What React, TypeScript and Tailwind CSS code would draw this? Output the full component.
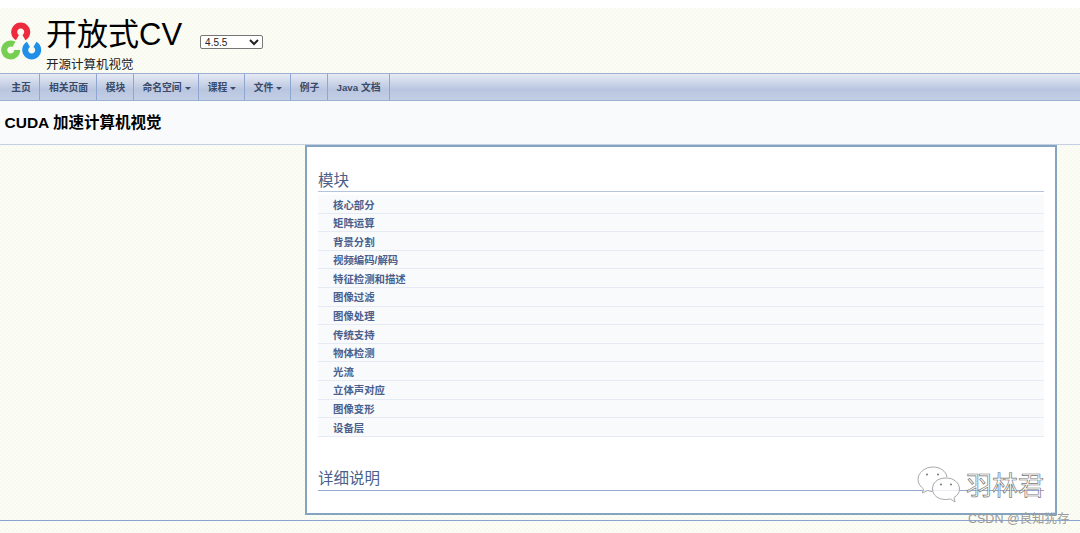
//dependencies
import React from "react";

const fontStack = "font-['Liberation_Sans','Noto_Sans_CJK_SC',sans-serif]";

const navItems = [
  { label: "主页", width: "w-[40px]", pad: "pl-[3px]" },
  { label: "相关页面", width: "w-[57px]", pad: "pl-[1px]" },
  { label: "模块", width: "w-[37px]", pad: "pl-[1px]" },
  { label: "命名空间", width: "w-[65px]", pad: "pl-[1px]", caret: true },
  { label: "课程", width: "w-[46px]", pad: "pl-[1px]", caret: true },
  { label: "文件", width: "w-[46px]", pad: "pl-[1px]", caret: true },
  { label: "例子", width: "w-[37px]", pad: "pl-[1px]" },
  { label: "Java 文档", width: "w-[62px]", pad: "pl-0" },
];

const modules = [
  "核心部分",
  "矩阵运算",
  "背景分割",
  "视频编码/解码",
  "特征检测和描述",
  "图像过滤",
  "图像处理",
  "传统支持",
  "物体检测",
  "光流",
  "立体声对应",
  "图像变形",
  "设备层",
];

const Logo: React.FC = () => (
  <svg width="44" height="44" viewBox="0 0 44 44" fill="none" className="shrink-0">
    <path d="M17.45 19.63 A6.5 6.5 0 1 1 23.95 19.63" stroke="#ee2a3e" strokeWidth="6" />
    <path d="M17.2 32 A6.5 6.5 0 1 1 13.95 26.37" stroke="#76cf52" strokeWidth="6" />
    <path d="M34.95 26.37 A6.5 6.5 0 1 1 28.45 26.37" stroke="#1f8fe8" strokeWidth="6" />
  </svg>
);

const WeChat: React.FC = () => (
  <svg width="44" height="40" viewBox="0 0 44 40" fill="none" stroke="#a8a8a8" strokeWidth="1">
    <path d="M16 1 C8 1 1 6.500 1 13.500 C1 17.500 3.500 20.500 6.500 23 L5.500 27 L10.500 24.500 C12 25 14 25.500 15.500 25.500" fill="#ffffffcc" />
    <path d="M30 11 C29 5 23 1 16 1" />
    <path d="M29 12 C20 12 15.500 17 15.500 23 C15.500 29 21 33.500 28.500 33.500 C30.500 33.500 32 33 33.500 33 L38 36 L37 31.500 C40.500 29.500 42.500 26.500 42.500 23 C42.500 17 37 12 29 12 Z" fill="#ffffffcc" />
    <circle cx="10" cy="8.500" r="1" fill="#777777" stroke="none" />
    <circle cx="21" cy="8.500" r="1" fill="#777777" stroke="none" />
    <circle cx="24" cy="18.500" r="1" fill="#777777" stroke="none" />
    <circle cx="34" cy="18.500" r="1" fill="#777777" stroke="none" />
  </svg>
);

const App: React.FC = () => {
  return (
    <div
      className={`relative h-[533px] w-[1080px] overflow-hidden bg-[#fbfcf5] bg-[repeating-conic-gradient(#f8f9ef_0_25%,#fdfdf8_0_50%)] bg-[length:4px_4px] ${fontStack}`}
    >
      <div className="h-2 bg-white" />

      {/* header */}
      <div className="flex h-[65px]">
        <div className="mt-[10px] h-[44px]">
          <Logo />
        </div>
        <div className="ml-[2px] flex flex-col">
          <div className="flex items-start">
            <h1 className="mt-[9px] text-[31px] leading-[36px] text-black">开放式CV</h1>
            <select className="mt-[27px] ml-[18px] h-[14px] w-[63px] rounded-[2px] border border-[#767676] bg-white text-[10px] leading-none text-[#222222]">
              <option>4.5.5</option>
            </select>
          </div>
          <p className="mt-[5px] text-[12.500px] leading-[15px] text-[#222222]">开源计算机视觉</p>
        </div>
      </div>

      {/* nav */}
      <div className="flex h-[28px] border-t border-b border-[#9cb0d3] bg-[linear-gradient(#e6eaf4,#b9c6e0_60%,#c3cfe5)]">
        {navItems.map((item) => (
          <div
            key={item.label}
            className={`flex shrink-0 items-center justify-center gap-[3px] border-r border-[#8fa6d0] pt-[2px] text-[9.800px] font-bold text-[#3a4a68] ${item.width} ${item.pad}`}
          >
            {item.label}
            {item.caret && (
              <span className="mt-px h-0 w-0 border-x-[3px] border-t-[3px] border-x-transparent border-t-[#3a4a68]" />
            )}
          </div>
        ))}
      </div>

      {/* title */}
      <div className="flex h-[44px] items-center border-b border-[#c4cfe5] bg-[#f9fafc] pl-[4.500px]">
        <h2 className="text-[15.500px] font-bold text-black">CUDA 加速计算机视觉</h2>
      </div>

      {/* contents */}
      <div className="ml-[305px] h-[370px] w-[752px] border-2 border-[#84a4c0] bg-white px-[11px]">
        <h3 className="mt-[23px] border-b border-[#b5c3dd] text-[15.500px] leading-[21px] font-normal text-[#4a5f8a]">
          模块
        </h3>
        <div className="mt-[3px]">
          {modules.map((name) => (
            <div
              key={name}
              className="flex h-[18.600px] items-center border-b border-[#e6eaf3] bg-[#f9fafc] pt-[3px] pl-[15px] text-[10.400px] font-bold text-[#4a5f8c]"
            >
              {name}
            </div>
          ))}
        </div>
        <h3 className="mt-[30px] border-b border-[#93a9d2] text-[15.500px] leading-[23px] font-normal text-[#4a5f8a]">
          详细说明
        </h3>
      </div>

      {/* footer rule */}
      <div className="mt-[5px] h-px bg-[#8ba4d0]" />

      {/* watermark */}
      <div className="absolute top-[466px] left-[917px] flex items-center gap-[5px]">
        <WeChat />
        <span className="text-[26px] leading-[40px] text-white/60 [-webkit-text-stroke:0.7px_#777777]">羽林君</span>
      </div>
      <span className="absolute top-[512px] left-[968px] text-[12.500px] leading-[15px] text-[#9a9a9a]">
        CSDN @良知犹存
      </span>
    </div>
  );
};

export default App;
